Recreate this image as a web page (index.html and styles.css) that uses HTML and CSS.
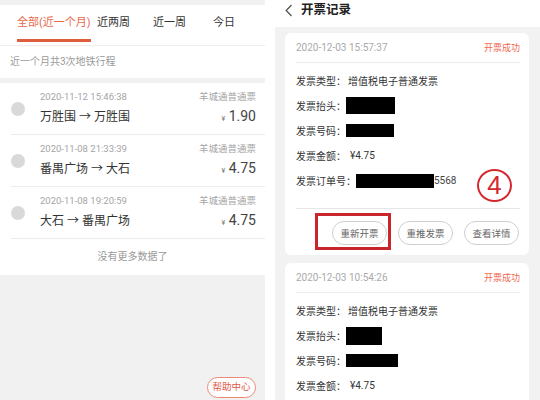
FILE: index.html
```html
<!DOCTYPE html>
<html lang="zh-CN">
<head>
<meta charset="utf-8">
<title>地铁行程与开票记录</title>
<link rel="stylesheet" href="styles.css">
</head>
<body>
<div class="page">
  <section class="left">
    <div class="topstrip"></div>
    <nav class="tabs">
      <span class="tab active">全部(近一个月)</span>
      <span class="tab">近两周</span>
      <span class="tab">近一周</span>
      <span class="tab">今日</span>
    </nav>
    <div class="summary">近一个月共3次地铁行程</div>
    <div class="sep"></div>
    <ul class="trips">
      <li class="trip">
        <span class="dot"></span>
        <div class="trip-body">
          <div class="trip-row meta"><span>2020-11-12 15:46:38</span><span>羊城通普通票</span></div>
          <div class="trip-row main"><span class="route">万胜围 → 万胜围</span><span class="price"><small>¥</small> 1.90</span></div>
        </div>
      </li>
      <li class="trip">
        <span class="dot"></span>
        <div class="trip-body">
          <div class="trip-row meta"><span>2020-11-08 21:33:39</span><span>羊城通普通票</span></div>
          <div class="trip-row main"><span class="route">番禺广场 → 大石</span><span class="price"><small>¥</small> 4.75</span></div>
        </div>
      </li>
      <li class="trip">
        <span class="dot"></span>
        <div class="trip-body">
          <div class="trip-row meta"><span>2020-11-08 19:20:59</span><span>羊城通普通票</span></div>
          <div class="trip-row main"><span class="route">大石 → 番禺广场</span><span class="price"><small>¥</small> 4.75</span></div>
        </div>
      </li>
    </ul>
    <div class="nomore">没有更多数据了</div>
    <div class="filler">
      <a class="help">帮助中心</a>
    </div>
  </section>

  <section class="right">
    <header class="rhead">
      <svg class="back" width="8" height="13" viewBox="0 0 8 13"><path d="M6.5 1 L1.2 6.5 L6.5 12" fill="none" stroke="#555" stroke-width="1.3"/></svg>
      <h1>开票记录</h1>
    </header>
    <div class="rbody">
      <article class="card">
        <div class="card-head"><span class="time">2020-12-03 15:57:37</span><span class="status">开票成功</span></div>
        <div class="info">
          <div class="row"><span class="label">发票类型：</span><span class="val">增值税电子普通发票</span></div>
          <div class="row"><span class="label">发票抬头：</span><span class="redact w49 h17"></span></div>
          <div class="row"><span class="label">发票号码：</span><span class="redact w48 h13"></span></div>
          <div class="row"><span class="label">发票金额：</span><span class="val amt">¥4.75</span></div>
          <div class="row"><span class="label">发票订单号：</span><span class="redact w78 h14"></span><span class="tail">5568</span></div>
        </div>
        <div class="actions">
          <button class="btn">重新开票</button>
          <button class="btn">重推发票</button>
          <button class="btn">查看详情</button>
        </div>
        <div class="mark-circle">4</div>
        <div class="mark-box"></div>
      </article>
      <article class="card">
        <div class="card-head"><span class="time">2020-12-03 10:54:26</span><span class="status">开票成功</span></div>
        <div class="info">
          <div class="row"><span class="label">发票类型：</span><span class="val">增值税电子普通发票</span></div>
          <div class="row"><span class="label">发票抬头：</span><span class="redact w36 h18"></span></div>
          <div class="row"><span class="label">发票号码：</span><span class="redact w52 h13"></span></div>
          <div class="row"><span class="label">发票金额：</span><span class="val amt">¥4.75</span></div>
        </div>
      </article>
    </div>
  </section>
</div>
</body>
</html>
```

FILE: styles.css
```css
* { box-sizing: border-box; }
html, body { margin: 0; padding: 0; }
body {
  width: 540px;
  height: 400px;
  overflow: hidden;
  background: #fff;
  font-family: Roboto, "Noto Sans CJK SC", sans-serif;
  color: #333;
}
.page {
  display: flex;
  gap: 10px;
  height: 400px;
}

/* ---------- left ---------- */
.left {
  width: 265px;
  display: flex;
  flex-direction: column;
  height: 400px;
}
.left > * { flex: none; }
.topstrip { height: 5px; background: #f1f1f1; }
.tabs {
  display: grid;
  grid-template-columns: 80px 56px 60px auto;
  align-items: start;
  padding: 0 0 3px 17px;
  border-bottom: 1px solid #ececec;
}
.tab {
  justify-self: start;
  font-size: 11px;
  line-height: 14px;
  padding: 11px 0 9px;
  border-bottom: 3px solid transparent;
  color: #333;
}
.tab.active {
  color: #e8694c;
  border-bottom-color: #de5d3d;
}
.summary {
  height: 32px;
  line-height: 32px;
  padding-left: 10px;
  font-size: 10px;
  color: #9a9a9a;
}
.sep { height: 5px; background: #f1f1f1; }
.trips { list-style: none; margin: 0; padding: 0; }
.trip {
  display: flex;
  align-items: center;
  margin-left: 11px;
  padding: 7px 9px 6px 0;
  border-bottom: 1px solid #ececec;
}
.dot {
  width: 14px;
  height: 14px;
  border-radius: 50%;
  background: #d9d9d9;
  margin-right: 15px;
  flex: none;
}
.trip-body { flex: 1; }
.trip-row {
  display: flex;
  justify-content: space-between;
  align-items: baseline;
}
.meta {
  font-size: 9.5px;
  line-height: 14px;
  color: #a5a5a5;
}
.main {
  margin-top: 3px;
  line-height: 18px;
}
.route { font-size: 12px; color: #333; }
.price { font-size: 14px; color: #444; }
.price small { font-size: 7px; color: #777; }
.nomore {
  height: 36px;
  line-height: 36px;
  text-align: center;
  font-size: 10px;
  color: #9a9a9a;
}
.left > .filler {
  flex: 1;
  background: #f1f1f1;
  position: relative;
}
.help {
  position: absolute;
  right: 9px;
  bottom: 2px;
  width: 49px;
  height: 21px;
  border: 1.5px solid #ea8a76;
  border-radius: 11px;
  background: #fff;
  color: #e05a45;
  font-size: 9.5px;
  line-height: 18px;
  text-align: center;
}

/* ---------- right ---------- */
.right {
  flex: 1;
  display: flex;
  flex-direction: column;
  height: 400px;
}
.rhead {
  flex: none;
  height: 27px;
  display: flex;
  align-items: flex-start;
  padding: 3px 0 0 10px;
}
.back { margin-right: 8px; margin-top: 1px; }
.rhead h1 {
  margin: 0;
  font-size: 12.5px;
  line-height: 14px;
  font-weight: 700;
  color: #222;
}
.rbody {
  flex: 1;
  background: #f2f2f2;
  padding: 6px 11px 0 10px;
  display: flex;
  flex-direction: column;
  gap: 8px;
}
.card {
  flex: none;
  position: relative;
  background: #fff;
  border-radius: 6px;
  padding: 0 9px 0 11px;
}
.card-head {
  height: 30px;
  display: flex;
  justify-content: space-between;
  align-items: center;
  border-bottom: 1px solid #ececec;
}
.time { font-size: 10px; color: #aaa; }
.status { font-size: 9px; color: #ef6a4f; }
.info { padding: 5px 0 15px; }
.row {
  height: 25px;
  display: flex;
  align-items: center;
  font-size: 10px;
  color: #333;
}
.label { color: #333; }
.val { margin-left: 2px; }
.amt { margin-left: 4px; }
.redact { display: inline-block; background: #000; }
.w36 { width: 36px; }
.w48 { width: 48px; }
.w49 { width: 49px; }
.w52 { width: 52px; }
.w78 { width: 78px; }
.h13 { height: 13px; }
.h14 { height: 14px; }
.h17 { height: 17px; }
.h18 { height: 18px; }
.tail { color: #444; }
.actions {
  border-top: 1px solid #e6e6e6;
  padding: 12px 1px 10px 0;
  display: flex;
  justify-content: flex-end;
  gap: 11px;
}
.btn {
  width: 55px;
  height: 24px;
  border: 1px solid #cfcfcf;
  border-radius: 12px;
  background: #fff;
  font-family: inherit;
  font-size: 9.5px;
  color: #666;
  padding: 0;
}
.mark-circle {
  position: absolute;
  left: 192px;
  top: 136px;
  width: 35px;
  height: 33px;
  border: 2px solid #d5282e;
  border-radius: 50%;
  color: #d5282e;
  font-family: "Liberation Sans", sans-serif;
  font-size: 26px;
  line-height: 29px;
  text-align: center;
}
.mark-box {
  position: absolute;
  left: 30px;
  top: 180px;
  width: 76px;
  height: 37px;
  border: 3px solid #c8262b;
}
```
